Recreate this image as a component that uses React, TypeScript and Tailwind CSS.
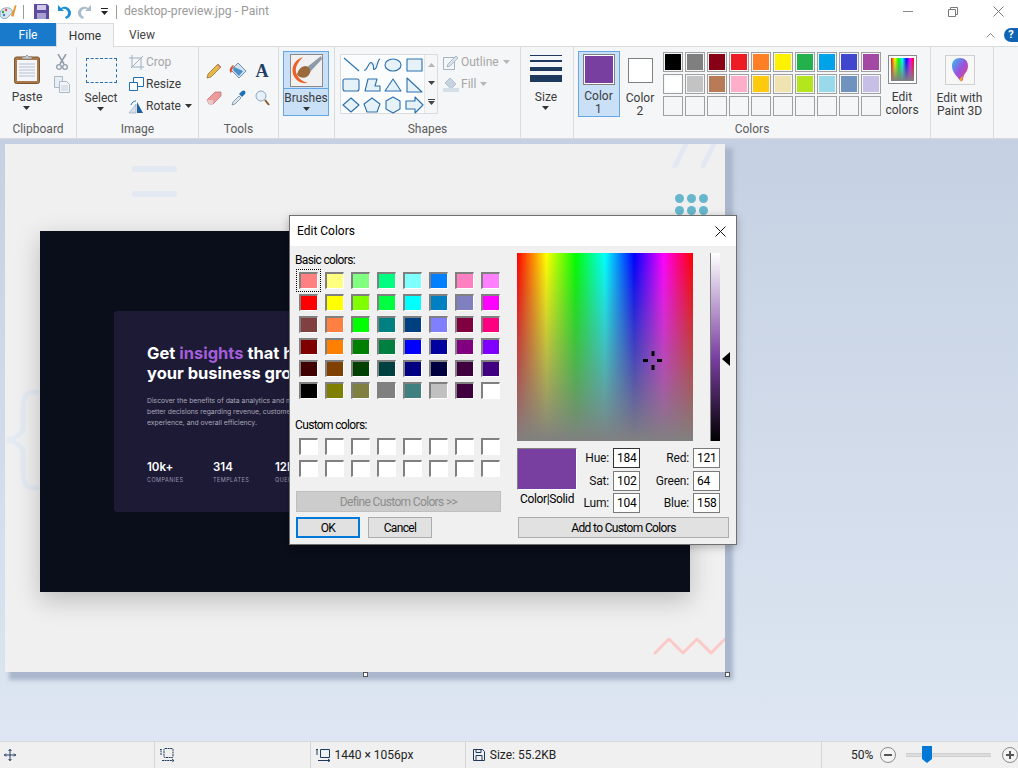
import React from 'react';

const PALETTE = [
  ['#000000', '#7f7f7f', '#880015', '#ed1c24', '#ff7f27', '#fff200', '#22b14c', '#00a2e8', '#3f48cc', '#a349a4'],
  ['#ffffff', '#c3c3c3', '#b97a57', '#ffaec9', '#ffc90e', '#efe4b0', '#b5e61d', '#99d9ea', '#7092be', '#c8bfe7'],
  ['', '', '', '', '', '', '', '', '', ''],
];

const BASIC = [
  '#ff8080', '#ffff80', '#80ff80', '#00ff80', '#80ffff', '#0080ff', '#ff80c0', '#ff80ff',
  '#ff0000', '#ffff00', '#80ff00', '#00ff40', '#00ffff', '#0080c0', '#8080c0', '#ff00ff',
  '#804040', '#ff8040', '#00ff00', '#008080', '#004080', '#8080ff', '#800040', '#ff0080',
  '#800000', '#ff8000', '#008000', '#008040', '#0000ff', '#0000a0', '#800080', '#8000ff',
  '#400000', '#804000', '#004000', '#004040', '#000080', '#000040', '#400040', '#400080',
  '#000000', '#808000', '#808040', '#808080', '#408080', '#c0c0c0', '#400040', '#ffffff',
];

function Caret({ color = '#333' }: { color?: string }) {
  return (
    <svg width="7" height="4" viewBox="0 0 7 4" className="block">
      <path d="M0 0h7L3.500 4z" fill={color} />
    </svg>
  );
}

function Group({ width, label, children }: { width: string; label: string; children: React.ReactNode }) {
  return (
    <section className={`${width} shrink-0 h-full flex flex-col border-r border-[#dadbdc]`}>
      <div className="flex-1 flex min-h-0">{children}</div>
      <div className="h-[17px] text-center text-[12px] leading-[17px] text-[#5c5c5c]">{label}</div>
    </section>
  );
}

function BigLabel({ lines, caret }: { lines: string[]; caret?: boolean }) {
  return (
    <div className="flex flex-col items-center text-[12px] leading-[13px] text-[#3c3c3c]">
      {lines.map((l) => (
        <span key={l} className="whitespace-nowrap">{l}</span>
      ))}
      {caret && (
        <div className="mt-[2px]">
          <Caret />
        </div>
      )}
    </div>
  );
}

function Shape({ d }: { d: string }) {
  return (
    <svg width="20" height="20" viewBox="0 0 20 20">
      <path d={d} fill="#e6f2f8" stroke="#2a70ae" strokeWidth="1.1" strokeLinejoin="round" />
    </svg>
  );
}

const SHAPES = [
  'M3 3L18 16',
  'M2 15C5 17 7 5 10 8S10 16 13 14 15 5 18 4',
  'M2 10a8 6 0 1 0 16 0a8 6 0 1 0 -16 0z',
  'M3 4h15v12H3z',
  'M2 6q0-2 2-2h12q2 0 2 2v8q0 2-2 2H4q-2 0-2-2z',
  'M3 16L6 4h9l-2 7h5v5z',
  'M10 4L18 16H2z',
  'M3 3L18 17H3z',
  'M10 3L18 10 10 17 2 10z',
  'M10 3L18 9 15 17H5L2 9z',
  'M10 2L17 6v8l-7 4-7-4V6z',
  'M2 6h9V2l8 8-8 8v-4H2z',
];

function Swatch({ color, selected }: { color: string; selected?: boolean }) {
  return (
    <div
      className={`w-[19px] h-[17px] border-t-2 border-l-2 border-r border-b border-t-[#808080] border-l-[#808080] border-r-white border-b-white ${
        selected ? 'outline-1 outline-dotted outline-offset-[2px] outline-black' : ''
      }`}
      style={{ backgroundColor: color }}
    />
  );
}

function Field({ label, value, focused, labelWidth }: { label: string; value: string; focused?: boolean; labelWidth: string }) {
  return (
    <div className="flex items-center h-[20px]">
      <span className={`${labelWidth} text-right text-[12px] text-[#111] pr-[4px]`}>{label}</span>
      <div
        className={`w-[27px] h-[20px] bg-white border text-[12px] leading-[18px] pl-[3px] text-black ${
          focused ? 'border-[#333]' : 'border-[#7a7a7a]'
        }`}
      >
        {value}
      </div>
    </div>
  );
}

function TitleBar() {
  return (
    <div className="h-[23px] bg-white flex items-center relative">
      <svg width="17" height="16" viewBox="0 0 17 16">
        <path d="M0 10C0 5 5 3 9 4s4 5 2 6-2 3-4 4-7 1-7-4z" fill="#d9e6ef" stroke="#6b8ba3" strokeWidth=".7" />
        <circle cx="3" cy="8" r="1.200" fill="#36a84a" />
        <circle cx="6" cy="6" r="1.200" fill="#e94b3c" />
        <circle cx="4" cy="11" r="1.200" fill="#2f7fd6" />
        <path d="M11 12L15 1l1.500.7-3 11z" fill="#e8962e" />
      </svg>
      <div className="w-px h-[14px] bg-[#9a9a9a] ml-[6px]" />
      <svg width="15" height="15" viewBox="0 0 15 15" className="ml-[10px]">
        <path d="M0 0h13l2 2v13H0z" fill="#5d4a9e" />
        <path d="M3 1h9v5H3z" fill="#cfc9e6" />
        <path d="M3 9h9v6H3z" fill="#a79fd0" />
      </svg>
      <svg width="14" height="15" viewBox="0 0 14 15" className="ml-[8px]">
        <path d="M1 1v6h6L5 5c3-1 6 1 6 4 0 2-1 3-3 4l1 2c3-1 5-3 5-6 0-5-6-8-10-5z" fill="#1c8ed8" />
      </svg>
      <svg width="14" height="15" viewBox="0 0 14 15" className="ml-[7px] -scale-x-100">
        <path d="M1 1v6h6L5 5c3-1 6 1 6 4 0 2-1 3-3 4l1 2c3-1 5-3 5-6 0-5-6-8-10-5z" fill="#a9bccb" />
      </svg>
      <div className="ml-[9px] flex flex-col items-center gap-[2px]">
        <div className="w-[7px] h-px bg-[#222]" />
        <Caret color="#222" />
      </div>
      <div className="w-px h-[14px] bg-[#9a9a9a] ml-[8px]" />
      <span className="ml-[7px] text-[12.200px] text-[#9b9b9b] whitespace-nowrap">desktop-preview.jpg - Paint</span>
      <div className="ml-auto flex items-center pr-[14px]">
        <div className="w-[10px] h-px bg-[#8a8a8a]" />
        <svg width="10" height="10" viewBox="0 0 10 10" className="ml-[35px]">
          <path d="M.5 2.500h7v7h-7zM2.500 2.500v-2h7v7h-2" fill="none" stroke="#7a7a7a" />
        </svg>
        <svg width="11" height="11" viewBox="0 0 11 11" className="ml-[35px]">
          <path d="M.5.500l10 10M10.500.500l-10 10" stroke="#7a7a7a" />
        </svg>
      </div>
    </div>
  );
}

function TabRow() {
  return (
    <div className="h-[24px] bg-white flex items-end relative border-b border-[#dadbdc]">
      <div className="w-[56px] h-[23px] bg-[#1979ca] text-white text-[12px] flex items-center justify-center">File</div>
      <div className="w-[58px] h-[24px] -mb-px bg-[#f5f6f8] border border-b-0 border-[#dadbdc] text-[12px] text-[#333] flex items-center justify-center">
        Home
      </div>
      <div className="w-[56px] h-[23px] text-[12px] text-[#444] flex items-center justify-center">View</div>
      <div className="ml-auto flex items-center h-[23px]">
        <svg width="9" height="6" viewBox="0 0 9 6">
          <path d="M.5 5.500l4-4 4 4" fill="none" stroke="#8a8a8a" />
        </svg>
        <div className="ml-[9px] w-[14px] h-[14px] rounded-l-full bg-[#0f63b5] text-white text-[11px] font-bold leading-[14px] text-center">?</div>
      </div>
    </div>
  );
}

function SmallCommand({ icon, label, muted, caret }: { icon: React.ReactNode; label: string; muted?: boolean; caret?: boolean }) {
  return (
    <div className="flex items-center h-[22px]">
      <div className="w-[16px] flex justify-center">{icon}</div>
      <span className={`ml-[2px] text-[12px] whitespace-nowrap ${muted ? 'text-[#a6a6a6]' : 'text-[#3c3c3c]'}`}>{label}</span>
      {caret && (
        <div className="ml-[4px]">
          <Caret color={muted ? '#b5b5b5' : '#333'} />
        </div>
      )}
    </div>
  );
}

function Ribbon() {
  return (
    <div className="h-[92px] bg-[#f5f6f8] flex border-b border-[#d8d9da]">
      <Group width="w-[77px]" label="Clipboard">
        <div className="w-[54px] flex flex-col items-center pt-[7px]">
          <svg width="26" height="30" viewBox="0 0 26 30">
            <rect x=".5" y="3" width="25" height="26.500" rx="2" fill="#a9794b" stroke="#7c5631" />
            <rect x="3" y="6" width="20" height="21" fill="#f4f6fa" />
            <path d="M5 10h16M5 13h16M5 16h16M5 19h16M5 22h16" stroke="#b5c0cf" />
            <path d="M8 5V3h3l2-2 2 2h3v2z" fill="#c9ccd0" stroke="#7f7f7f" strokeWidth=".7" />
          </svg>
          <div className="mt-[7px]">
            <BigLabel lines={['Paste']} caret />
          </div>
        </div>
        <div className="flex flex-col items-center pt-[7px] gap-[6px]">
          <svg width="12" height="16" viewBox="0 0 12 16">
            <path d="M2 0l6 10M10 0L4 10" stroke="#8f9ba8" strokeWidth="1.500" />
            <circle cx="3" cy="13" r="2.300" fill="none" stroke="#8f9ba8" strokeWidth="1.300" />
            <circle cx="9" cy="13" r="2.300" fill="none" stroke="#8f9ba8" strokeWidth="1.300" />
          </svg>
          <svg width="16" height="17" viewBox="0 0 16 17">
            <path d="M.5.500h8v11h-8z" fill="#e8eef4" stroke="#a9b8c6" />
            <path d="M5.500 5.500h7l3 3v8h-10z" fill="#f3f6f9" stroke="#a9b8c6" />
            <path d="M7 10h7M7 12h7M7 14h7" stroke="#c4cfd9" />
          </svg>
        </div>
      </Group>
      <Group width="w-[122px]" label="Image">
        <div className="w-[48px] flex flex-col items-center pt-[11px]">
          <div className="w-[31px] h-[25px] border border-dashed border-[#2a70ae]" />
          <div className="mt-[9px]">
            <BigLabel lines={['Select']} caret />
          </div>
        </div>
        <div className="pt-[4px] ml-[3px]">
          <SmallCommand
            muted
            label="Crop"
            icon={
              <svg width="15" height="15" viewBox="0 0 15 15">
                <path d="M3 0v12h12M0 3h12v12M2 13L14 1" fill="none" stroke="#9eb0c2" />
              </svg>
            }
          />
          <SmallCommand
            label="Resize"
            icon={
              <svg width="15" height="14" viewBox="0 0 15 14">
                <path d="M4.500.500h10v9h-10z" fill="#fff" stroke="#1f6fb4" />
                <path d="M.5 5.500h8v8h-8z" fill="#fff" stroke="#1f6fb4" />
              </svg>
            }
          />
          <SmallCommand
            label="Rotate"
            caret
            icon={
              <svg width="16" height="15" viewBox="0 0 16 15">
                <path d="M1 14L8 5v9z" fill="#d9e2ea" stroke="#8fa2b3" strokeWidth=".6" />
                <path d="M9 3l6 11H9z" fill="#1f5f9c" />
                <path d="M3 6C4 3 6 2 8 2" fill="none" stroke="#1f6fb4" />
              </svg>
            }
          />
        </div>
      </Group>
      <Group width="w-[80px]" label="Tools">
        <div className="grid grid-cols-[24px_24px_24px] grid-rows-[27px_27px] ml-[3px] mt-[10px] place-items-center h-[54px]">
          <svg width="16" height="16" viewBox="0 0 16 16">
            <path d="M1 15l1-4L12 1l3 3L5 14z" fill="#e8b844" stroke="#7d6a3a" strokeWidth=".7" />
            <path d="M11 2l3 3 1-1-3-3z" fill="#e0787a" />
          </svg>
          <svg width="18" height="17" viewBox="0 0 18 17">
            <path d="M9 1l8 8-7 7-8-8z" fill="#cfe3f2" stroke="#6f8faa" />
            <path d="M5 5L14 9 10 14 4 8z" fill="#4a8fc9" />
            <path d="M4 3C1 5 0 8 1 10s2 0 2-2 1-3 2-4z" fill="#e0532a" />
          </svg>
          <span className="font-['Liberation_Serif',serif] font-bold text-[18px] leading-none text-[#1f3f66]">A</span>
          <svg width="16" height="14" viewBox="0 0 16 14">
            <path d="M1 9l8-8h6v4l-8 8H3z" fill="#ef9a9a" stroke="#b96b6b" strokeWidth=".7" />
            <path d="M1 9h6v4H3z" fill="#e8c9c9" />
          </svg>
          <svg width="15" height="16" viewBox="0 0 15 16">
            <path d="M1 15l1-3 6-6 2 2-6 6z" fill="#d9e6f0" stroke="#5f7d96" strokeWidth=".7" />
            <path d="M8 4l3-3q2-1 3 0t0 3l-3 3z" fill="#1f6fb4" />
          </svg>
          <svg width="15" height="16" viewBox="0 0 15 16">
            <circle cx="6" cy="6" r="5" fill="#e5f0f8" stroke="#8fa5b8" />
            <path d="M10 10l4 5" stroke="#8a5a2e" strokeWidth="2" />
          </svg>
        </div>
      </Group>
      <Group width="w-[56px]" label="">
        <div className="ml-[4px] mt-[4px] w-[46px] h-[65px] bg-[#c9e0f7] border border-[#64a6e6] flex flex-col items-center">
          <div className="w-full h-[37px] shrink-0 flex items-center justify-center border-b border-[#64a6e6]">
            <svg width="33" height="33" viewBox="0 0 33 33">
              <rect x=".5" y=".5" width="32" height="32" fill="#f1f1f1" stroke="#8a8a8a" />
              <path d="M31 2L16 14l4 4L32 5z" fill="#8d9aa8" />
              <path d="M16 12c-4 0-8 3-9 9 4 4 10 4 13-2 1-3-1-6-4-7z" fill="#9a6a3c" />
              <path d="M13 3C5 6 1 12 3 20c2 6 7 10 15 9-7-2-11-6-12-11-1-5 2-10 7-15z" fill="#e8622a" />
            </svg>
          </div>
          <div className="mt-[3px]">
            <BigLabel lines={['Brushes']} caret />
          </div>
        </div>
      </Group>
      <Group width="w-[186px]" label="Shapes">
        <div className="ml-[5px] mt-[7px] w-[98px] h-[60px] border border-[#d9dbdd] flex">
          <div className="w-[83px] bg-[#fbfcfd] grid grid-cols-4 place-items-center">
            {SHAPES.map((d) => (
              <Shape key={d} d={d} />
            ))}
          </div>
          <div className="flex-1 border-l border-[#e3e5e7] flex flex-col items-center justify-between py-[8px]">
            <svg width="7" height="4" viewBox="0 0 7 4">
              <path d="M3.500 0L7 4H0z" fill="#b5b5b5" />
            </svg>
            <Caret color="#444" />
            <div className="flex flex-col items-center gap-[1px]">
              <div className="w-[7px] h-px bg-[#444]" />
              <Caret color="#444" />
            </div>
          </div>
        </div>
        <div className="ml-[5px] pt-[4px]">
          <SmallCommand
            muted
            caret
            label="Outline"
            icon={
              <svg width="16" height="15" viewBox="0 0 16 15">
                <path d="M.5 2.500h11v12H.5z" fill="none" stroke="#a4b3c2" />
                <path d="M4 12l1-3 8-8 2 2-8 8z" fill="#dbe3ea" stroke="#95a5b5" strokeWidth=".7" />
              </svg>
            }
          />
          <SmallCommand
            muted
            caret
            label="Fill"
            icon={
              <svg width="16" height="15" viewBox="0 0 16 15">
                <path d="M7 1l6 6-5 5-6-6z" fill="#c6d3e0" stroke="#9fb0c0" strokeWidth=".7" />
                <path d="M0 11h16v4H0z" fill="#d5dfe8" />
              </svg>
            }
          />
        </div>
      </Group>
      <Group width="w-[53px]" label="">
        <div className="w-full flex flex-col items-center pt-[8px] pr-[2px]">
          <div className="w-[32px] h-px bg-[#1e3a5f]" />
          <div className="w-[32px] h-[2px] bg-[#1e3a5f] mt-[4px]" />
          <div className="w-[32px] h-[4px] bg-[#1e3a5f] mt-[5px]" />
          <div className="w-[32px] h-[7px] bg-[#1e3a5f] mt-[4px]" />
          <div className="mt-[9px]">
            <BigLabel lines={['Size']} caret />
          </div>
        </div>
      </Group>
      <Group width="w-[357px]" label="Colors">
        <div className="ml-[4px] mt-[4px] w-[42px] h-[66px] bg-[#c9e0f7] border border-[#64a6e6] flex flex-col items-center pt-[2px]">
          <div className="w-[32px] h-[32px] border border-[#808080] p-px bg-white">
            <div className="w-full h-full bg-[#793fa0]" />
          </div>
          <div className="mt-[5px] -ml-[1px]">
            <BigLabel lines={['Color', '1']} />
          </div>
        </div>
        <div className="w-[42px] mt-[4px] flex flex-col items-center pt-[7px] pr-[2px]">
          <div className="w-[25px] h-[25px] border border-[#808080] bg-white" />
          <div className="mt-[9px]">
            <BigLabel lines={['Color', '2']} />
          </div>
        </div>
        <div className="ml-[1px] mt-[5px] grid grid-cols-10 gap-[2px] h-[64px] content-start">
          {PALETTE.flat().map((c, i) => (
            <div key={i} className="w-[20px] h-[20px] border border-[#a0a0a0] p-px">
              <div className="w-full h-full" style={{ backgroundColor: c || 'transparent' }} />
            </div>
          ))}
        </div>
        <div className="ml-[2px] w-[38px] flex flex-col items-center pt-[8px]">
          <div className="w-[29px] h-[29px] border border-[#8a8a8a] p-[2px] bg-white">
            <div className="w-full h-full bg-[linear-gradient(to_bottom,transparent,#808080),linear-gradient(to_right,#ff0000,#ffff00,#00ff00,#00ffff,#0000ff,#ff00ff,#ff0000)]" />
          </div>
          <div className="mt-[7px]">
            <BigLabel lines={['Edit', 'colors']} />
          </div>
        </div>
      </Group>
      <Group width="w-[63px]" label="">
        <div className="w-full flex flex-col items-center pt-[8px] pr-[5px]">
          <div className="w-[30px] h-[30px] bg-[#f7f7f7] border border-[#d0d0d0] flex items-center justify-center">
            <svg width="18" height="26" viewBox="0 0 18 26">
              <defs>
                <linearGradient id="p3d" x1="0" y1="0" x2="1" y2="1">
                  <stop offset="0" stopColor="#27c7ee" />
                  <stop offset=".5" stopColor="#9a52e0" />
                  <stop offset="1" stopColor="#f0446a" />
                </linearGradient>
              </defs>
              <path d="M9 1C4 1 1 4 1 9c0 6 5 11 9 15 2 1 2-3 3-6 2-3 4-5 4-9 0-5-3-8-8-8z" fill="url(#p3d)" />
              <path d="M9 24c2 1 2-2 3-5-2 1-4 3-3 5z" fill="#f5a623" />
            </svg>
          </div>
          <div className="mt-[7px]">
            <BigLabel lines={['Edit with', 'Paint 3D']} />
          </div>
        </div>
      </Group>
    </div>
  );
}

function Stat({ value, label, width }: { value: string; label: string; width: string }) {
  return (
    <div className={`${width} flex flex-col`}>
      <span className="text-[11.500px] leading-[14px] font-semibold text-white">{value}</span>
      <span className="mt-[3px] text-[5.500px] leading-[7px] tracking-[0.08em] text-[#9a98ad]">{label}</span>
    </div>
  );
}

function PaintedImage() {
  return (
    <div className="relative w-[720px] h-[528px] bg-[#f0f0f0] shadow-[6px_6px_4px_2px_#aab6cb] pt-[87px] pl-[35px] shrink-0">
      <div className="absolute left-[127px] top-[22px] w-[45px] h-[6px] rounded-full bg-[#e2e9f2]" />
      <div className="absolute left-[127px] top-[47px] w-[45px] h-[6px] rounded-full bg-[#e2e9f2]" />
      <svg width="50" height="26" viewBox="0 0 50 26" className="absolute left-[664px] top-0">
        <path d="M6 22L18-2M34 22L46-2" stroke="#e2e9f2" strokeWidth="5" strokeLinecap="round" />
      </svg>
      <div className="absolute left-[670px] top-[50px] grid grid-cols-3 gap-[3px]">
        {[0, 1, 2, 3, 4, 5].map((i) => (
          <div key={i} className="w-[9px] h-[9px] rounded-full bg-[#66b7cc]" />
        ))}
      </div>
      <svg width="36" height="100" viewBox="0 0 36 100" className="absolute left-0 top-[246px]">
        <path d="M34 2H28C20 2 18 8 18 16V36C18 44 12 48 2 50 12 52 18 56 18 64V84C18 92 20 98 28 98H34" fill="none" stroke="#e4ebf3" strokeWidth="5" />
      </svg>
      <svg width="72" height="20" viewBox="0 0 72 20" className="absolute left-[648px] top-[492px]">
        <path d="M2 17L16 3l14 14L44 3l14 14L72 3" fill="none" stroke="#fbcac7" strokeWidth="3" strokeLinejoin="round" strokeLinecap="round" />
      </svg>
      <div className="relative w-[650px] h-[361px] bg-[#0a0d1a] shadow-[0_8px_24px_rgba(0,0,0,0.22)] pt-[80px] pl-[74px] font-['Inter',sans-serif]">
        <div className="w-[440px] h-[201px] rounded-[3px] bg-[#1d1a36] pt-[32px] pl-[33px]">
          <h2 className="text-[16.500px] leading-[20px] font-bold text-white whitespace-nowrap">
            Get <span className="text-[#a45ed9]">insights</span> that help
            <br />
            your business grow
          </h2>
          <p className="mt-[12px] w-[240px] text-[6.800px] leading-[11px] text-[#a9a8b8] whitespace-nowrap">
            Discover the benefits of data analytics and make
            <br />
            better decisions regarding revenue, customer
            <br />
            experience, and overall efficiency.
          </p>
          <div className="mt-[32px] flex">
            <Stat value="10k+" label="COMPANIES" width="w-[66px]" />
            <Stat value="314" label="TEMPLATES" width="w-[62px]" />
            <Stat value="12M+" label="QUERIES" width="w-[60px]" />
          </div>
        </div>
      </div>
    </div>
  );
}

function EditColors() {
  return (
    <div className="absolute left-[289px] top-[215px] w-[448px] h-[330px] border border-[#6f6f6f] bg-[#f0f0f0] shadow-[0_2px_8px_rgba(0,0,0,0.25)] text-[12px] tracking-[-0.65px] text-black flex flex-col">
      <div className="h-[30px] shrink-0 bg-white flex items-center justify-between pl-[7px] pr-[10px]">
        <span className="tracking-normal">Edit Colors</span>
        <svg width="11" height="11" viewBox="0 0 11 11">
          <path d="M.5.500l10 10M10.500.500l-10 10" stroke="#111" />
        </svg>
      </div>
      <div className="flex-1 flex">
        <div className="w-[227px] pl-[5px] flex flex-col">
          <div className="mt-[6px] h-[16px] leading-[16px]">Basic colors:</div>
          <div className="mt-[4px] ml-[4px] grid grid-cols-[repeat(8,19px)] gap-x-[7px] gap-y-[5px]">
            {BASIC.map((c, i) => (
              <Swatch key={i} color={c} selected={i === 0} />
            ))}
          </div>
          <div className="mt-[18px] h-[16px] leading-[16px]">Custom colors:</div>
          <div className="mt-[5px] ml-[4px] grid grid-cols-[repeat(8,19px)] gap-x-[7px] gap-y-[5px]">
            {Array.from({ length: 16 }).map((_, i) => (
              <Swatch key={i} color="#ffffff" />
            ))}
          </div>
          <div className="mt-[14px] ml-[1px] w-[205px] h-[21px] bg-[#cccccc] border border-[#bfbfbf] text-[#8c8c8c] flex items-center justify-center">
            Define Custom Colors &gt;&gt;
          </div>
          <div className="mt-[5px] ml-[1px] flex gap-[8px]">
            <div className="w-[64px] h-[21px] bg-[#e1e1e1] border-2 border-[#0078d7] flex items-center justify-center">OK</div>
            <div className="w-[64px] h-[21px] bg-[#e1e1e1] border border-[#adadad] flex items-center justify-center">Cancel</div>
          </div>
        </div>
        <div className="flex-1 pt-[7px] flex flex-col">
          <div className="flex">
            <div className="relative w-[176px] h-[188px] bg-[linear-gradient(to_bottom,transparent,#808080),linear-gradient(to_right,#ff0000,#ffff00,#00ff00,#00ffff,#0000ff,#ff00ff,#ff0000)]">
              <svg width="20" height="20" viewBox="0 0 20 20" className="absolute left-[126px] top-[98px]">
                <path d="M8.500 0h3v5h-3zM8.500 14h3v5h-3zM0 8h5v3H0zM14 8h5v3h-5z" fill="#000" />
              </svg>
            </div>
            <div className="ml-[17px] w-[10px] h-[188px] border-l border-[#808080] bg-[linear-gradient(to_bottom,#ffffff,#793fa0_56%,#000000)]" />
            <svg width="8" height="14" viewBox="0 0 8 14" className="ml-[2px] mt-[99px]">
              <path d="M8 0v14L0 7z" fill="#000" />
            </svg>
          </div>
          <div className="mt-[7px] flex">
            <div className="w-[60px] flex flex-col items-center">
              <div className="w-[60px] h-[42px] bg-[#793fa0] border-t border-l border-t-[#808080] border-l-[#808080] border-r border-b border-r-white border-b-white" />
              <span className="mt-[1px] leading-[16px] whitespace-nowrap tracking-[-0.35px]">Color|Solid</span>
            </div>
            <div className="flex flex-col gap-[2.500px] ml-[1px] tracking-[-0.2px]">
              <Field label="Hue:" value="184" focused labelWidth="w-[35px]" />
              <Field label="Sat:" value="102" labelWidth="w-[35px]" />
              <Field label="Lum:" value="104" labelWidth="w-[35px]" />
            </div>
            <div className="flex flex-col gap-[2.500px] tracking-[-0.2px]">
              <Field label="Red:" value="121" labelWidth="w-[53px]" />
              <Field label="Green:" value="64" labelWidth="w-[53px]" />
              <Field label="Blue:" value="158" labelWidth="w-[53px]" />
            </div>
          </div>
          <div className="mt-[4px] ml-[1px] w-[211px] h-[21px] bg-[#e1e1e1] border border-[#adadad] flex items-center justify-center">
            Add to Custom Colors
          </div>
        </div>
      </div>
    </div>
  );
}

function StatusBar() {
  return (
    <div className="h-[27px] bg-[#f0f0f0] border-t border-[#d9d9d9] flex text-[12px] text-[#222]">
      <div className="w-[156px] h-full border-r border-[#d4d4d4] pl-[4px] flex items-center">
        <svg width="12" height="12" viewBox="0 0 12 12">
          <path d="M6 0v12M0 6h12M4.500 2L6 .5 7.500 2M4.500 10L6 11.500 7.500 10M2 4.500L.5 6 2 7.500M10 4.500L11.500 6 10 7.500" fill="none" stroke="#1e3a5f" />
        </svg>
      </div>
      <div className="w-[156px] h-full border-r border-[#d4d4d4] pl-[5px] flex items-center">
        <svg width="14" height="14" viewBox="0 0 14 14">
          <path d="M1 7V1M0 2l1-1 1 1M5 .5h7q1 0 1 1v7q0 1-1 1H5q-1 0-1-1v-7q0-1 1-1M2 12.500h12M12 11l2 1.500-2 1.500" fill="none" stroke="#1e3a5f" strokeDasharray="2 .6" />
        </svg>
      </div>
      <div className="w-[156px] h-full border-r border-[#d4d4d4] pl-[5px] flex items-center">
        <svg width="14" height="14" viewBox="0 0 14 14">
          <path d="M1 7V1M0 2l1-1 1 1M4.500 1.500h9v8h-9zM2 12.500h12M12 11l2 1.500-2 1.500" fill="none" stroke="#1e3a5f" />
        </svg>
        <span className="ml-[5px]">1440 × 1056px</span>
      </div>
      <div className="w-[358px] h-full border-r border-[#d4d4d4] pl-[7px] flex items-center">
        <svg width="12" height="12" viewBox="0 0 12 12">
          <path d="M.5.500h9l2 2v9H.5zM3 .5v3h5v-3M3 11.500v-5h6v5" fill="none" stroke="#1e3a5f" />
        </svg>
        <span className="ml-[5px]">Size: 55.2KB</span>
      </div>
      <div className="flex-1 flex items-center pl-[29px]">
        <span className="w-[29px]">50%</span>
        <svg width="16" height="16" viewBox="0 0 16 16" className="shrink-0">
          <circle cx="8" cy="8" r="7.500" fill="#f4f4f4" stroke="#8a8a8a" />
          <path d="M4 8h8" stroke="#555" strokeWidth="2" />
        </svg>
        <div className="relative ml-[10px] w-[85px] h-[4px] bg-[#dcdcdc] border-y border-[#d0d0d0]">
          <svg width="10" height="17" viewBox="0 0 10 17" className="absolute left-[16px] -top-[8px]">
            <path d="M0 0h10v13l-5 4-5-4z" fill="#0078d7" />
          </svg>
        </div>
        <svg width="16" height="16" viewBox="0 0 16 16" className="ml-[11px] shrink-0">
          <circle cx="8" cy="8" r="7.500" fill="#f4f4f4" stroke="#8a8a8a" />
          <path d="M4 8h8M8 4v8" stroke="#555" strokeWidth="2" />
        </svg>
      </div>
    </div>
  );
}

export default function App() {
  return (
    <div className="relative w-[1018px] h-[768px] overflow-hidden flex flex-col font-['Roboto','Noto_Sans',sans-serif]">
      <TitleBar />
      <TabRow />
      <Ribbon />
      <main className="relative flex-1 overflow-hidden bg-[linear-gradient(to_bottom,#c5d0e2,#dde6f2)] pl-[5px] pt-[5px]">
        <PaintedImage />
        <div className="absolute left-[363px] top-[533px] w-[5px] h-[5px] bg-white border border-[#555]" />
        <div className="absolute left-[725px] top-[533px] w-[5px] h-[5px] bg-white border border-[#555]" />
      </main>
      <StatusBar />
      <EditColors />
    </div>
  );
}
